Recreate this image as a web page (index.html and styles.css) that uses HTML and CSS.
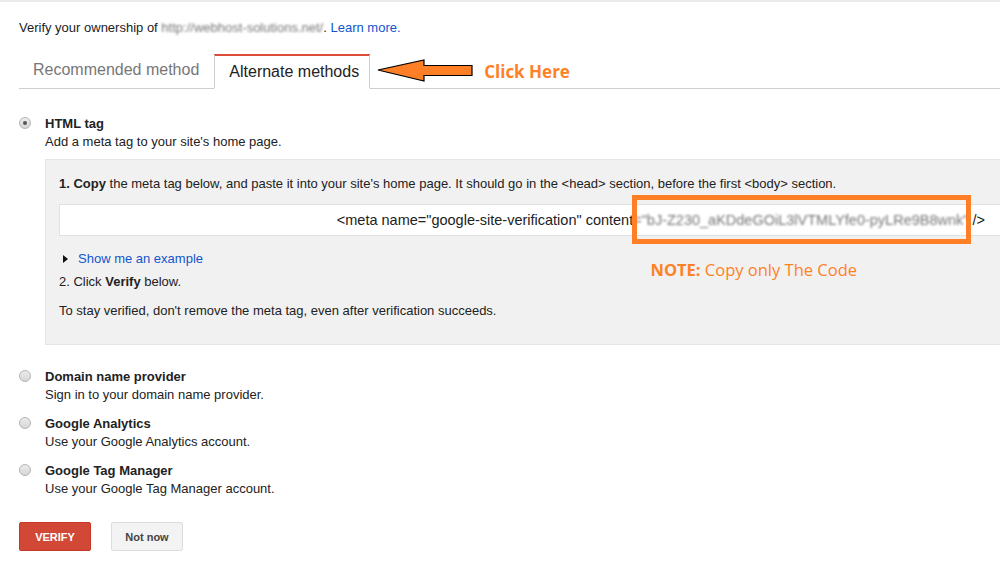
FILE: index.html
```html
<!DOCTYPE html>
<html lang="en">
  <head>
    <meta charset="UTF-8" />
    <meta name="viewport" content="width=device-width, initial-scale=1.0" />
    <title>Verify ownership</title>
    <link rel="stylesheet" href="styles.css">
  </head>
  <body>
    <div class="page">
      <p class="intro">Verify your ownership of <span class="blur">http://webhost-solutions.net/</span>. <a href="">Learn more.</a></p>

      <!-- tabs -->
      <div class="tabs">
        <div class="tab">Recommended method</div>
        <div class="tab on">Alternate methods</div>
        <div class="hint">
          <svg class="arrow" width="98" height="26" viewBox="0 0 98 26">
            <polygon points="1,12 47,2 47,7.5 95,7.5 95,17.5 47,17.5 47,23" fill="#ff7f27" stroke="#000" stroke-width="1.2"/>
          </svg>
          <span class="click">Click Here</span>
        </div>
      </div>

      <div class="method">
        <span class="radio checked"></span>
        <div class="method-body">
          <h3>HTML tag</h3>
          <p class="desc">Add a meta tag to your site's home page.</p>
          <div class="box">
            <p class="step"><b>1. Copy</b> the meta tag below, and paste it into your site's home page. It should go in the &lt;head&gt; section, before the first &lt;body&gt; section.</p>
            <div class="code">
              &lt;meta name="google-site-verification" content<span class="blur code-val">="bJ-Z230_aKDdeGOiL3lVTMLYfe0-pyLRe9B8wnk"</span> /&gt;
              <span class="mark"></span>
            </div>
            <div class="below">
              <div class="left">
                <p class="example"><span class="tri"></span><a href="">Show me an example</a></p>
                <p class="step2">2. Click <b>Verify</b> below.</p>
                <p class="stay">To stay verified, don't remove the meta tag, even after verification succeeds.</p>
              </div>
              <p class="note"><b>NOTE:</b> Copy only The Code</p>
            </div>
          </div>
        </div>
      </div>

      <div class="method">
        <span class="radio"></span>
        <div class="method-body">
          <h3>Domain name provider</h3>
          <p class="desc">Sign in to your domain name provider.</p>
        </div>
      </div>
      <div class="method">
        <span class="radio"></span>
        <div class="method-body">
          <h3>Google Analytics</h3>
          <p class="desc">Use your Google Analytics account.</p>
        </div>
      </div>
      <div class="method">
        <span class="radio"></span>
        <div class="method-body">
          <h3>Google Tag Manager</h3>
          <p class="desc">Use your Google Tag Manager account.</p>
        </div>
      </div>

      <div class="buttons">
        <button class="btn red">VERIFY</button>
        <button class="btn">Not now</button>
      </div>
    </div>
  </body>
</html>
```
FILE: styles.css
```css
* {
  margin: 0;
  padding: 0;
  box-sizing: border-box;
}
html, body {
  overflow: hidden;
}
body {
  font-family: "Liberation Sans", Arial, sans-serif;
  font-size: 13px;
  color: #222;
  background: #fff;
  border-top: 2px solid #ebebeb;
}
a {
  color: #1155cc;
  text-decoration: none;
}
.page {
  padding: 18px 0 0 19px;
  width: 1040px;
}
.blur {
  color: #777;
  filter: blur(1.2px);
}
.intro {
  line-height: 16px;
}

/* tabs */
.tabs {
  display: flex;
  align-items: flex-end;
  margin-top: 18px;
  border-bottom: 1px solid #cfcfcf;
  height: 35px;
}
.tab {
  padding: 0 14px;
  height: 34px;
  line-height: 32px;
  font-size: 16px;
  color: #777;
}
.tab.on {
  color: #222;
  background: #fff;
  border: 1px solid #cfcfcf;
  border-top: 2px solid #dd4b39;
  border-bottom-color: #fff;
  height: 35px;
  margin-bottom: -1px;
  margin-left: 1px;
  padding-right: 10px;
}
.hint {
  display: flex;
  align-items: center;
  align-self: center;
  margin-left: 7px;
}
.click {
  margin-left: 9px;
  font-family: "Open Sans", sans-serif;
  font-weight: 700;
  font-size: 17px;
  color: #ff8125;
}

/* methods */
.method {
  display: flex;
  margin-top: 26px;
}
.method + .method {
  margin-top: 11px;
}
.method:nth-child(4) {
  margin-top: 23px;
}
.radio {
  width: 12px;
  height: 12px;
  border-radius: 50%;
  border: 1px solid #b5b5b5;
  background: linear-gradient(#ececec, #d6d6d6);
  margin: 2px 14px 0 0;
  flex: none;
  position: relative;
}
.radio.checked::after {
  content: "";
  position: absolute;
  left: 3px;
  top: 3px;
  width: 4px;
  height: 4px;
  border-radius: 50%;
  background: #555;
}
.method-body h3 {
  font-size: 13px;
  font-weight: 700;
  line-height: 18px;
}
.desc {
  line-height: 18px;
}

/* gray box */
.box {
  margin-top: 8px;
  width: 980px;
  background: #f1f1f1;
  border: 1px solid #e5e5e5;
  padding: 16px 0 25px 13px;
}
.step {
  line-height: 16px;
}
.code {
  position: relative;
  margin-top: 12px;
  width: 950px;
  height: 32px;
  background: #fff;
  border: 1px solid #e0e0e0;
  text-align: right;
  padding-right: 23px;
  line-height: 30px;
  font-size: 14.5px;
  white-space: nowrap;
}
.mark {
  position: absolute;
  left: 572px;
  top: -10px;
  width: 339px;
  height: 49px;
  border: 5px solid #ff7f27;
}
.below {
  display: flex;
}
.example {
  margin-top: 15px;
  line-height: 16px;
  display: flex;
  align-items: center;
}
.tri {
  width: 0;
  height: 0;
  border-left: 5px solid #111;
  border-top: 4px solid transparent;
  border-bottom: 4px solid transparent;
  margin: 0 10px 0 4px;
}
.step2 {
  margin-top: 7px;
  line-height: 16px;
}
.stay {
  margin-top: 13px;
  line-height: 16px;
}
.note {
  margin: 22px 0 0 154px;
  font-family: "Open Sans", sans-serif;
  font-size: 16.5px;
  color: #ff8125;
}

/* buttons */
.buttons {
  display: flex;
  gap: 20px;
  margin-top: 24px;
}
.btn {
  width: 72px;
  height: 29px;
  border-radius: 2px;
  font-family: "Liberation Sans", Arial, sans-serif;
  font-size: 11px;
  font-weight: 700;
  border: 1px solid #dcdcdc;
  background: #f3f3f3;
  color: #444;
}
.btn.red {
  background: #d14836;
  border-color: #c53727;
  color: #fff;
}
```
